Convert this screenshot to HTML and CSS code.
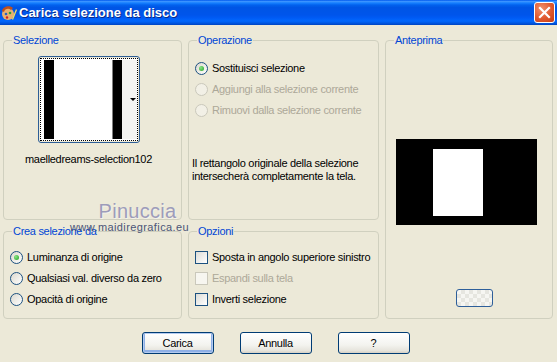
FILE: index.html
```html
<!DOCTYPE html>
<html lang="it">
  <head>
    <meta charset="UTF-8" />
    <title>Carica selezione da disco</title>
    <link rel="stylesheet" href="styles.css">
  </head>
  <body>
    <div class="window">
      <div class="titlebar">
        <svg class="app-icon" width="16" height="16" viewBox="0 0 16 16">
          <ellipse cx="7" cy="9" rx="6" ry="6" fill="#e8b070" />
          <path d="M1 6 C2 1, 9 0, 12 3 L10 5 C8 3, 4 3, 3 7 Z" fill="#c0501c" />
          <circle cx="5" cy="9" r="1.3" fill="#2a60c0" />
          <circle cx="9" cy="8" r="1.3" fill="#30a030" />
          <circle cx="6" cy="12.5" r="1.2" fill="#d02020" />
          <path d="M11 14 L15 4 L16 5 L12 15 Z" fill="#f0e060" />
        </svg>
        <span class="title">Carica selezione da disco</span>
        <div class="close">
          <svg width="13" height="13" viewBox="0 0 13 13">
            <path d="M2 2 L11 11 M11 2 L2 11" stroke="#fff" stroke-width="2.2" stroke-linecap="square" />
          </svg>
        </div>
      </div>

      <div class="content">
        <div class="groups">
          <fieldset class="group selection">
            <legend>Selezione</legend>
            <div class="thumb">
              <div class="thumb-focus">
                <div class="thumb-pic">
                  <span class="bar-black wide"></span>
                  <span class="bar-white"></span>
                  <span class="bar-grey"></span>
                  <span class="bar-black"></span>
                </div>
                <div class="thumb-drop"><span class="arrow"></span></div>
              </div>
            </div>
            <div class="filename">maelledreams-selection102</div>
          </fieldset>

          <fieldset class="group operation">
            <legend>Operazione</legend>
            <div class="options">
              <div class="opt"><span class="radio checked"></span>Sostituisci selezione</div>
              <div class="opt disabled"><span class="radio"></span>Aggiungi alla selezione corrente</div>
              <div class="opt disabled"><span class="radio"></span>Rimuovi dalla selezione corrente</div>
            </div>
            <p class="note">Il rettangolo originale della selezione intersecherà completamente la tela.</p>
          </fieldset>

          <fieldset class="group preview">
            <legend>Anteprima</legend>
            <div class="preview-canvas"><div class="preview-sel"></div></div>
            <div class="preview-btn"></div>
          </fieldset>

          <fieldset class="group source">
            <legend>Crea selezione da</legend>
            <div class="options">
              <div class="opt"><span class="radio checked"></span>Luminanza di origine</div>
              <div class="opt"><span class="radio"></span>Qualsiasi val. diverso da zero</div>
              <div class="opt"><span class="radio"></span>Opacità di origine</div>
            </div>
          </fieldset>

          <fieldset class="group extras">
            <legend>Opzioni</legend>
            <div class="options">
              <div class="opt"><span class="check"></span>Sposta in angolo superiore sinistro</div>
              <div class="opt disabled"><span class="check"></span>Espandi sulla tela</div>
              <div class="opt"><span class="check"></span>Inverti selezione</div>
            </div>
          </fieldset>
        </div>

        <div class="buttons">
          <button class="btn default">Carica</button>
          <button class="btn">Annulla</button>
          <button class="btn">?</button>
        </div>
      </div>

      <div class="watermark">
        <div class="wm-name">Pinuccia</div>
        <div class="wm-site">www.maidiregrafica.eu</div>
      </div>
    </div>
  </body>
</html>
```

FILE: styles.css
```css
body {
  margin: 0;
  background: #ece9d8;
  font-family: "Liberation Sans", Arial, sans-serif;
  font-size: 11px;
  letter-spacing: -0.3px;
  color: #000;
}

.window {
  position: relative;
  width: 557px;
  height: 362px;
  overflow: hidden;
}

.titlebar {
  height: 25px;
  display: flex;
  align-items: center;
  padding-left: 1px;
  background: linear-gradient(
    to bottom,
    #0058ee 0%,
    #3a93ff 6%,
    #1680ff 12%,
    #0262ee 20%,
    #0055e5 30%,
    #0055eb 60%,
    #005bf5 72%,
    #0268fc 84%,
    #0058e4 92%,
    #0044c0 100%
  );
}

.app-icon {
  flex: none;
}

.title {
  margin-left: 2px;
  color: #fff;
  font-weight: bold;
  font-size: 13px;
  letter-spacing: 0;
  text-shadow: 1px 1px 0 #0a2a88;
}

.close {
  margin-left: auto;
  margin-right: 2px;
  width: 19px;
  height: 19px;
  border: 1px solid #fff;
  border-radius: 3px;
  background: radial-gradient(circle at 35% 30%, #f0906c, #e0582e 55%, #c43c16);
  display: flex;
  align-items: center;
  justify-content: center;
}

.content {
  padding: 9px 4px 0 3px;
}

.groups {
  display: grid;
  grid-template-columns: 179px 191px 168px;
  grid-template-rows: 186px 94px;
  column-gap: 6px;
  row-gap: 5px;
}

.group {
  margin: 0;
  padding: 0 3px 3px 3px;
  border: 1px solid #d0d0bf;
  border-radius: 4px;
  min-width: 0;
}

.group legend {
  margin-left: 5px;
  padding: 0 1px;
  line-height: 13px;
  color: #0046d5;
}

/* selection picker */
.selection {
  display: flex;
  flex-direction: column;
  align-items: center;
  padding-right: 11px;
}

.thumb {
  margin-top: 9px;
  width: 98px;
  height: 83px;
  border: 1px solid #2d5e96;
  border-radius: 3px;
  padding: 1px;
  box-sizing: content-box;
  display: flex;
}

.thumb-focus {
  flex: 1;
  border: 1px dotted #000;
  display: flex;
  padding: 1px 0 1px 3px;
  background: #fff;
}

.thumb-pic {
  width: 78px;
  display: flex;
}

.bar-black {
  width: 9px;
  background: #000;
}

.bar-black.wide {
  width: 10px;
}

.bar-white {
  width: 58px;
  background: #fff;
}

.bar-grey {
  width: 1px;
  background: #808080;
}

.thumb-drop {
  flex: 1;
  background: #f4f4f2;
  display: flex;
  align-items: center;
  justify-content: flex-end;
  padding-right: 1px;
}

.arrow {
  width: 0;
  height: 0;
  border-left: 3px solid transparent;
  border-right: 3px solid transparent;
  border-top: 3px solid #000;
}

.filename {
  margin-top: 10px;
  line-height: 13px;
}

/* radio & check options */
.options {
  display: flex;
  flex-direction: column;
  gap: 8px;
}

.operation .options {
  margin-top: 15px;
  padding-left: 3px;
}

.source .options {
  margin-top: 13px;
  padding-left: 3px;
}

.extras .options {
  margin-top: 13px;
  padding-left: 3px;
}

.opt {
  display: flex;
  align-items: center;
  gap: 4px;
  line-height: 13px;
}

.opt.disabled {
  color: #aca899;
}

.radio {
  flex: none;
  width: 11px;
  height: 11px;
  border: 1px solid #1c5180;
  border-radius: 50%;
  background: linear-gradient(135deg, #dcd9ce, #fff);
  display: flex;
  align-items: center;
  justify-content: center;
}

.radio.checked::after {
  content: "";
  width: 5px;
  height: 5px;
  border-radius: 50%;
  background: radial-gradient(circle at 35% 35%, #8ae486, #21a121);
}

.opt.disabled .radio {
  border-color: #cac8bb;
  background: #f2f0e6;
}

.check {
  flex: none;
  width: 11px;
  height: 11px;
  border: 1px solid #1c5180;
  background: linear-gradient(135deg, #dcdcd7, #fff);
}

.opt.disabled .check {
  border-color: #cac8bb;
  background: #f7f6f0;
}

.note {
  margin: 40px 0 0 0;
  line-height: 13px;
}

/* preview */
.preview {
  grid-row: 1 / span 2;
  grid-column: 3;
  display: flex;
  flex-direction: column;
  align-items: center;
  padding-bottom: 11px;
}

.preview-canvas {
  margin-top: 92px;
  margin-left: -5px;
  width: 141px;
  height: 86px;
  background: #000;
  display: flex;
  align-items: center;
  padding-left: 37px;
  box-sizing: border-box;
}

.preview-sel {
  width: 50px;
  height: 67px;
  background: #fff;
}

.preview-btn {
  margin-top: auto;
  margin-left: 10px;
  width: 35px;
  height: 16px;
  border: 1px solid #2e5f9a;
  border-radius: 3px;
  background:
    linear-gradient(45deg, #e6e6e0 25%, transparent 25%, transparent 75%, #e6e6e0 75%),
    linear-gradient(45deg, #e6e6e0 25%, transparent 25%, transparent 75%, #e6e6e0 75%),
    #f6f6f2;
  background-size: 8px 8px;
  background-position: 0 0, 4px 4px;
}

/* bottom buttons */
.buttons {
  display: flex;
  justify-content: center;
  gap: 26px;
  margin-top: 13px;
  padding-right: 5px;
}

.btn {
  width: 72px;
  height: 22px;
  border: 1px solid #003c74;
  border-radius: 3px;
  background: linear-gradient(#fff, #f3f3ef 60%, #e6e4dc 88%, #d6d0c5);
  font-family: "Liberation Sans", Arial, sans-serif;
  font-size: 11px;
  letter-spacing: -0.3px;
  color: #000;
  padding: 0;
}

.btn.default {
  box-shadow: inset 0 0 0 1px #b4cbf0, inset 0 -1px 0 2px #8fb0e6;
}

/* watermark over the dialog */
.watermark {
  position: absolute;
  left: 70px;
  top: 200px;
  display: flex;
  flex-direction: column;
  align-items: center;
  pointer-events: none;
}

.wm-name {
  margin-left: 16px;
  font-size: 20px;
  letter-spacing: 0.3px;
  line-height: 22px;
  color: #9d9cba;
  text-shadow: 1px 1px 0 #f4f2ea;
}

.wm-site {
  font-size: 11px;
  letter-spacing: 0.4px;
  line-height: 11px;
  color: #4b5577;
}
```
